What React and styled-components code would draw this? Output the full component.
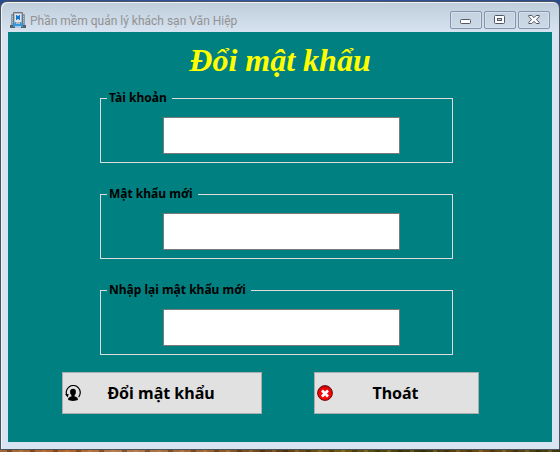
import React from "react";
import styled, { createGlobalStyle } from "styled-components";

const GlobalStyle = createGlobalStyle`
  * { box-sizing: border-box; }
  body {
    margin: 0;
    background: #2b4a8c;
    font-family: "Noto Sans", "Open Sans", sans-serif;
  }
`;

const Desktop = styled.div`
  display: flex;
  flex-direction: column;
  min-height: 100vh;
  padding: 1px 0 2px;
  background:
    repeating-linear-gradient(90deg, transparent 0 7px, rgba(30, 20, 5, 0.35) 7px 12px, transparent 12px 19px, rgba(220, 160, 70, 0.25) 19px 23px)
    bottom / 100% 12px no-repeat,
    linear-gradient(90deg, #a0683a, #b0622a 12%, #b07a50 22%, #96602f 38%, #5a3c14 50%, #6e5a12 60%, #38360f 75%, #6a4a14 86%, #3c3a10)
    bottom / 100% 12px no-repeat,
    linear-gradient(90deg, #2b4a8c, #3059a8 50%, #2b4a8c);
`;

const Window = styled.main`
  flex: 1;
  display: flex;
  flex-direction: column;
  padding: 0 7px 7px;
  border: 1px solid #4c535c;
  border-radius: 7px 7px 0 0;
  background: linear-gradient(#bfcddb, #d8e4f1 32px);
  box-shadow: inset 1px 1px 0 #eef4fa;
`;

const TitleBar = styled.header`
  display: flex;
  align-items: center;
  height: 30px;
  padding: 6px 2px 0 2px;
  gap: 4px;
`;

const Caption = styled.h1`
  flex: 1;
  margin: 0;
  padding-top: 2px;
  color: #929292;
  font: 400 12px/18px Roboto, "Noto Sans", sans-serif;
  white-space: nowrap;
`;

const WindowControls = styled.div`
  display: flex;
  gap: 2px;
`;

const ControlButton = styled.button`
  display: flex;
  align-items: center;
  justify-content: center;
  width: 32px;
  height: 18px;
  padding: 0;
  border: 1px solid #8593ae;
  border-radius: 2px;
  background: linear-gradient(#c4d1de, #ccd9e6);
  box-shadow: inset 0 0 0 1px #d5e0ea;
`;

const Form = styled.form`
  flex: 1;
  display: flex;
  flex-direction: column;
  background: #008080;
`;

const Heading = styled.h2`
  margin: 8px 0 0 0;
  color: #ffff00;
  font: italic 700 32px/40px "Liberation Serif", serif;
  text-align: center;
`;

const Fields = styled.div`
  display: flex;
  flex-direction: column;
  gap: 23px;
  padding: 10px 99px 0 92px;
`;

const Group = styled.fieldset`
  min-width: 0;
  margin: 0;
  padding: 11px 52px 8px 62px;
  border: 1px solid #dcdcdc;
`;

const Legend = styled.legend`
  margin-left: -56px;
  padding: 0 5px 0 2px;
  color: #000;
  font-size: 12px;
  font-weight: 700;
  line-height: 16px;
  white-space: nowrap;
`;

const TextBox = styled.input`
  display: block;
  width: 100%;
  height: 37px;
  padding: 0 6px;
  border: 1px solid #7a7a7a;
  border-radius: 0;
  background: #fff;
  font: 16px "Noto Sans", sans-serif;
  outline: none;
`;

const Actions = styled.div`
  display: grid;
  grid-template-columns: 200fr 165fr;
  gap: 52px;
  padding: 17px 73px 28px 54px;
`;

const ActionButton = styled.button`
  display: grid;
  grid-template-columns: 16px 1fr 18px;
  align-items: center;
  height: 42px;
  padding: 0 2px;
  border: 1px solid #adadad;
  background: #e1e1e1;
  color: #000;
  font: 700 16px/24px "Noto Sans", sans-serif;
  white-space: nowrap;
`;

const HotelIcon = () => (
  <svg width="16" height="16" viewBox="0 0 16 16" aria-hidden="true">
    <rect x="1" y="2" width="14" height="12" rx="1" fill="#8b98a5" />
    <rect x="3" y="0" width="10" height="13" rx="1" fill="#6c737c" />
    <rect x="4" y="1" width="8" height="11" fill="#b3b9bf" />
    <rect x="5" y="2" width="6" height="8" fill="#dfe5ea" />
    <path d="M6 3h4v5H6z" fill="#1678cc" />
    <path d="M7 3h2v1H7zM7 7h2v1H7z" fill="#a9cdea" />
    <path d="M2.5 4v7M13.5 4v7" stroke="#7cd3f1" strokeDasharray="1 1" />
    <path d="M0 13h16v3H0z" fill="#59616a" />
    <path d="M3 14l2-4h1v2h4v-2h1l2 4v1H3z" fill="#329ae2" />
    <path d="M5 14h6v2H5z" fill="#b7cbdc" />
  </svg>
);

const MinimizeIcon = () => (
  <svg width="12" height="12" viewBox="0 0 12 12" aria-hidden="true">
    <rect x="0.5" y="5.5" width="10" height="4" rx="1" fill="#fff" stroke="#535666" />
  </svg>
);

const MaximizeIcon = () => (
  <svg width="12" height="12" viewBox="0 0 12 12" aria-hidden="true">
    <rect x="0.5" y="1.5" width="10" height="8" rx="1" fill="#fff" stroke="#535666" />
    <rect x="3.5" y="4.5" width="4" height="2" fill="#c4d1de" stroke="#535666" />
  </svg>
);

const CloseIcon = () => (
  <svg width="12" height="12" viewBox="0 0 12 12" aria-hidden="true">
    <path
      d="M.8 1.5h3L6 3.7l2.2-2.2h3v1.2L8.3 5.5l2.9 2.8v1.2h-3L6 7.3 3.8 9.5h-3V8.3l2.9-2.8L.8 2.7z"
      fill="#fff"
      stroke="#535666"
      strokeLinejoin="round"
    />
  </svg>
);

const UserRefreshIcon = () => (
  <svg width="16" height="16" viewBox="0 0 16 16" aria-hidden="true">
    <path d="M2 10.6A7 7 0 1 1 13.6 12" fill="none" stroke="#000" strokeWidth="1.2" />
    <path d="M0 9.2l3.6-.2-.7 3.4z" />
    <ellipse cx="8" cy="7" rx="2.9" ry="3.3" />
    <path d="M6.4 9h3.2v3H6.4z" />
    <path d="M3 14.6c0-2 1.6-2.8 3.4-3.1h3.2c1.8.3 3.4 1.1 3.4 3.1-1 1-2.8 1.4-5 1.4s-4-.4-5-1.4z" />
  </svg>
);

const ExitIcon = () => (
  <svg width="16" height="16" viewBox="0 0 16 16" aria-hidden="true">
    <defs>
      <radialGradient id="exit-red" cx="50%" cy="65%" r="60%">
        <stop offset="0" stopColor="#ff1010" />
        <stop offset="0.65" stopColor="#f00505" />
        <stop offset="1" stopColor="#c80808" />
      </radialGradient>
    </defs>
    <circle cx="8" cy="8" r="7.4" fill="url(#exit-red)" stroke="#651010" />
    <path d="M5 5.5l6 6M11 5.5l-6 6" stroke="#fff" strokeWidth="2.7" />
  </svg>
);

const fields = [
  { id: "account", label: "Tài khoản", type: "text" },
  { id: "new-password", label: "Mật khẩu mới", type: "password" },
  { id: "repeat-password", label: "Nhập lại mật khẩu mới", type: "password" },
];

export default function App() {
  return (
    <>
      <GlobalStyle />
      <Desktop>
        <Window>
          <TitleBar>
            <HotelIcon />
            <Caption>Phần mềm quản lý khách sạn Văn Hiệp</Caption>
            <WindowControls>
              <ControlButton type="button" aria-label="Minimize"><MinimizeIcon /></ControlButton>
              <ControlButton type="button" aria-label="Maximize"><MaximizeIcon /></ControlButton>
              <ControlButton type="button" aria-label="Close"><CloseIcon /></ControlButton>
            </WindowControls>
          </TitleBar>
          <Form onSubmit={(event) => event.preventDefault()}>
            <Heading>Đổi mật khẩu</Heading>
            <Fields>
              {fields.map(({ id, label, type }) => (
                <Group key={id}>
                  <Legend><label htmlFor={id}>{label}</label></Legend>
                  <TextBox id={id} type={type} autoComplete="off" />
                </Group>
              ))}
            </Fields>
            <Actions>
              <ActionButton type="submit"><UserRefreshIcon />Đổi mật khẩu</ActionButton>
              <ActionButton type="button"><ExitIcon />Thoát</ActionButton>
            </Actions>
          </Form>
        </Window>
      </Desktop>
    </>
  );
}
